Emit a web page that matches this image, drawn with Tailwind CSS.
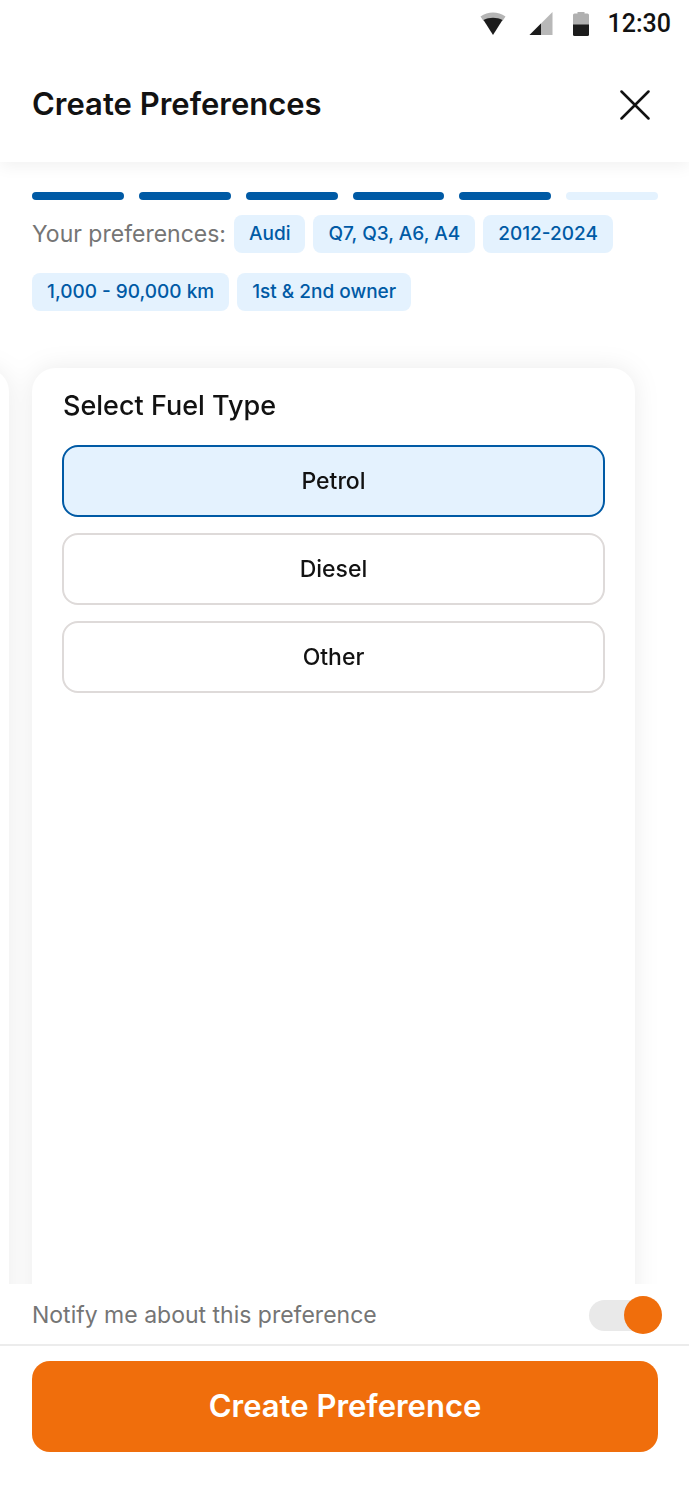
<!DOCTYPE html>
<html lang="en">
<head>
    <meta charset="UTF-8" />
    <meta name="viewport" content="width=device-width, initial-scale=1.0" />
    <title>Create Preferences</title>

    <!-- Tailwind CSS -->
    <script src="https://cdn.jsdelivr.net/npm/@tailwindcss/browser@4"></script>
</head>

<body class="bg-white font-['Inter',sans-serif] text-[#121212]">
    <div class="flex flex-col min-h-screen">

        <!-- Status bar -->
        <div class="relative z-10 flex justify-end items-center h-12 pr-[18px] bg-white font-['Roboto',sans-serif]">
            <svg class="w-[26px] h-6 mr-[23px]" viewBox="0 0 26 24" fill="none">
                <path d="M0.5 4.500C8 -0.700 18 -0.700 25.500 4.500L22.500 9C17 5 9 5 3.500 9Z" fill="#b5b5b5" />
                <path d="M3.500 8C9 5 17 5 22.500 8L13 23Z" fill="#1c1c1c" />
            </svg>
            <svg class="w-6 h-6 mr-5" viewBox="0 0 24 24" fill="none">
                <path d="M0.500 23L23.500 0V23Z" fill="#b8b8b8" />
                <path d="M0.500 23L12 11.500V23Z" fill="#1c1c1c" />
            </svg>
            <svg class="w-4 h-6 mr-[19px]" viewBox="0 0 16 24" fill="none">
                <path d="M4.500 0H11.500V1.500H14.500Q16 1.500 16 3V13H0V3Q0 1.500 1.500 1.500H4.500Z" fill="#b0b0b0" />
                <path d="M0 12.500H16V22.500Q16 24 14.500 24H1.500Q0 24 0 22.500Z" fill="#1c1c1c" />
            </svg>
            <span class="text-[25px] font-medium">12:30</span>
        </div>

        <!-- Header -->
        <header class="flex justify-between items-center h-[114px] pl-8 pr-[31px] shadow-[0_4px_16px_rgba(0,0,0,0.06)]">
            <h1 class="pb-[2px] text-[31px] font-semibold">Create Preferences</h1>
            <button type="button" aria-label="Close" class="p-2">
                <svg class="w-[30px] h-[30px]" viewBox="0 0 30 30" fill="none" stroke="#121212" stroke-width="2.500" stroke-linecap="round">
                    <path d="M1.500 1.500L28.500 28.500M28.500 1.500L1.500 28.500" />
                </svg>
            </button>
        </header>

        <!-- Progress -->
        <div class="grid grid-cols-6 gap-[15px] pl-8 pr-[31px] mt-[30px]" role="progressbar" aria-label="Steps" aria-valuenow="5" aria-valuemin="0" aria-valuemax="6">
            <span class="h-2 rounded-full bg-[#005aa5]"></span>
            <span class="h-2 rounded-full bg-[#005aa5]"></span>
            <span class="h-2 rounded-full bg-[#005aa5]"></span>
            <span class="h-2 rounded-full bg-[#005aa5]"></span>
            <span class="h-2 rounded-full bg-[#005aa5]"></span>
            <span class="h-2 rounded-full bg-[#e4f2fe]"></span>
        </div>

        <!-- Chosen preferences -->
        <div class="flex flex-wrap items-center gap-x-2 gap-y-5 px-8 mt-[15px] text-[19px] font-medium text-[#005aa5]">
            <span class="text-[23px] font-normal text-[#757575]">Your preferences:</span>
            <span class="h-[38px] px-[15px] leading-[37px] rounded-lg bg-[#e4f2fe]">Audi</span>
            <span class="h-[38px] px-[15px] leading-[37px] rounded-lg bg-[#e4f2fe]">Q7, Q3, A6, A4</span>
            <span class="h-[38px] px-[15px] leading-[37px] rounded-lg bg-[#e4f2fe]">2012-2024</span>
            <span class="h-[38px] px-[15px] leading-[37px] rounded-lg bg-[#e4f2fe]">1,000 - 90,000 km</span>
            <span class="h-[38px] px-[15px] leading-[37px] rounded-lg bg-[#e4f2fe]">1st &amp; 2nd owner</span>
        </div>

        <!-- Step cards, the previous one peeks in from the left -->
        <main class="flex-1 flex mt-6 pt-[33px] overflow-hidden">
            <div class="flex-1 flex gap-[23px] pr-[54px] -ml-[71px] -mb-10 drop-shadow-[0_0_12px_rgba(0,0,0,0.08)]">
                <div class="w-20 rounded-tr-[24px] bg-white"></div>
                <form class="flex-1 p-[30px] pt-5 rounded-t-[24px] bg-white">
                    <fieldset class="flex flex-col gap-4 text-[23px] leading-[34px] font-medium">
                        <legend class="mb-[21px] px-px text-[27px] leading-9">Select Fuel Type</legend>
                        <label class="flex justify-center items-center h-[72px] rounded-[16px] border-2 border-[#dedad9] has-checked:border-[#005aa5] has-checked:bg-[#e4f2fe]">
                            <input type="radio" name="fuel" value="petrol" class="sr-only" checked />
                            Petrol
                        </label>
                        <label class="flex justify-center items-center h-[72px] rounded-[16px] border-2 border-[#dedad9] has-checked:border-[#005aa5] has-checked:bg-[#e4f2fe]">
                            <input type="radio" name="fuel" value="diesel" class="sr-only" />
                            Diesel
                        </label>
                        <label class="flex justify-center items-center h-[72px] rounded-[16px] border-2 border-[#dedad9] has-checked:border-[#005aa5] has-checked:bg-[#e4f2fe]">
                            <input type="radio" name="fuel" value="other" class="sr-only" />
                            Other
                        </label>
                    </fieldset>
                </form>
            </div>
        </main>

        <!-- Footer -->
        <footer>
            <div class="flex justify-between items-center h-[62px] pt-[2px] pl-8 pr-[27px] border-b-2 border-[#ececec]">
                <label for="notify" class="text-[23px] text-[#757575]">Notify me about this preference</label>
                <input type="checkbox" id="notify" role="switch" checked class="appearance-none flex items-center w-[73px] h-[31px] rounded-full bg-[#e9e9e9] before:size-[38px] before:rounded-full before:bg-[#9a9a9a] checked:before:ml-auto checked:before:bg-[#f06e0c]" />
            </div>
            <div class="pl-8 pr-[31px] pt-[15px] pb-[38px]">
                <button type="button" class="w-full h-[91px] rounded-[18px] bg-[#f06e0c] text-white text-[31px] font-semibold">Create Preference</button>
            </div>
        </footer>
    </div>
</body>
</html>
